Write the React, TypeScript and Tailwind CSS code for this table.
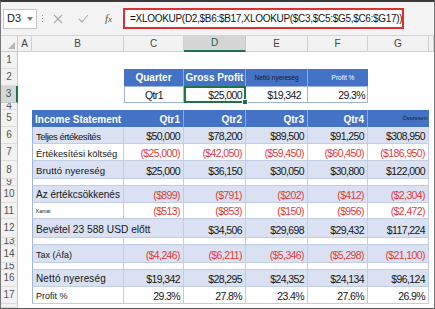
import React from 'react';

const GRID = 'grid grid-cols-[17px_14px_92px_60px_62px_62px_60px_61px_1fr]';
const SANS = "font-['Liberation_Sans',Arial,sans-serif]";
const NUM = "font-['Liberation_Sans',Arial,sans-serif] text-[10.5px] tracking-[-0.6px]";
const RED = 'text-[#e23b3b]';

function RH({ n, active }: { n?: number | string; active?: boolean }) {
  return (
    <div
      className={`flex items-center justify-center overflow-hidden border-b border-r text-[10px] leading-none ${SANS} ${
        active
          ? 'bg-[#d6d6d6] border-r-2 border-r-[#217346] border-b-[#c8c8c8] text-[#1f5f3b]'
          : 'bg-[#f2f2f2] border-r-[#c8c8c8] border-b-[#dcdcdc] text-[#555]'
      }`}
    >
      {n}
    </div>
  );
}

function W() {
  return <div className="bg-white" />;
}

function TC({
  children,
  band,
  right,
  red,
  first,
  className = '',
}: {
  children?: React.ReactNode;
  band?: boolean;
  right?: boolean;
  red?: boolean;
  first?: boolean;
  className?: string;
}) {
  return (
    <div
      className={`flex items-end whitespace-nowrap overflow-visible border-r border-b border-[#c3cde2] px-[3px] pb-[2px] leading-none ${
        band ? 'bg-[#d9e1f2]' : 'bg-white'
      } ${right ? 'justify-end' : ''} ${red ? RED : 'text-[#151515]'} ${first ? 'border-l border-l-[#9fb4dc]' : ''} ${className}`}
    >
      {children}
    </div>
  );
}

type DataRow = {
  n: number;
  h: string;
  band: boolean;
  label?: React.ReactNode;
  labelCls?: string;
  vals?: string[];
  red?: boolean;
  spanLabel?: boolean;
};

const rows: DataRow[] = [
  {
    n: 6,
    h: 'h-[17px]',
    band: true,
    label: 'Teljes értékesítés',
    labelCls: `${SANS} text-[9.5px] tracking-[-0.5px]`,
    vals: ['$50,000', '$78,200', '$89,500', '$91,250', '$308,950'],
  },
  {
    n: 7,
    h: 'h-[17px]',
    band: false,
    label: 'Értékesítési költség',
    labelCls: `${SANS} text-[9.4px]`,
    vals: ['($25,000)', '($42,050)', '($59,450)', '($60,450)', '($186,950)'],
    red: true,
  },
  {
    n: 8,
    h: 'h-[18px]',
    band: true,
    label: 'Bruttó nyereség',
    labelCls: `${SANS} text-[9.6px] tracking-[0.1px]`,
    vals: ['$25,000', '$36,150', '$30,050', '$30,800', '$122,000'],
  },
  { n: 9, h: 'h-[7px]', band: false },
  {
    n: 10,
    h: 'h-[17px]',
    band: true,
    label: 'Az értékcsökkenés',
    labelCls: `${SANS} text-[10px]`,
    vals: ['($899)', '($791)', '($202)', '($412)', '($2,304)'],
    red: true,
  },
  {
    n: 11,
    h: 'h-[16px]',
    band: false,
    label: 'Kamat',
    labelCls: `${SANS} text-[5px] pb-[4px]`,
    vals: ['($513)', '($853)', '($150)', '($956)', '($2,472)'],
    red: true,
  },
  {
    n: 12,
    h: 'h-[19px]',
    band: true,
    label: 'Bevétel 23 588 USD előtt',
    labelCls: `${SANS} text-[10.2px]`,
    vals: ['', '$34,506', '$29,698', '$29,432', '$117,224'],
    spanLabel: true,
  },
  { n: 13, h: 'h-[7px]', band: false },
  {
    n: 14,
    h: 'h-[18px]',
    band: true,
    label: 'Tax (Áfa)',
    labelCls: `${SANS} text-[9px]`,
    vals: ['($4,246)', '($6,211)', '($5,346)', '($5,298)', '($21,100)'],
    red: true,
  },
  { n: 15, h: 'h-[7px]', band: false },
  {
    n: 16,
    h: 'h-[17px]',
    band: true,
    label: 'Nettó nyereség',
    labelCls: `${SANS} text-[10px] tracking-[0.15px]`,
    vals: ['$19,342', '$28,295', '$24,352', '$24,134', '$96,124'],
  },
  {
    n: 17,
    h: 'h-[17px]',
    band: false,
    label: 'Profit %',
    labelCls: `${SANS} text-[9px]`,
    vals: ['29.3%', '27.8%', '23.4%', '27.6%', '26.9%'],
  },
];

function FormulaBar() {
  return (
    <div className="h-[34px] bg-[#f3f3f3] flex items-center border-b border-[#d4d4d4]">
      <div
        className={`ml-[2px] w-[34px] h-[20px] bg-white border border-[#c6c6c6] flex items-center justify-between pl-[3px] pr-[3px] text-[11px] text-[#222] ${SANS}`}
      >
        <span>D3</span>
        <svg width="6" height="4" viewBox="0 0 6 4">
          <path d="M0 0 L6 0 L3 4 Z" fill="#777" />
        </svg>
      </div>
      <div className="ml-[5px] flex flex-col gap-[2px]">
        <div className="w-[1px] h-[1px] bg-[#9a9a9a]" />
        <div className="w-[1px] h-[1px] bg-[#9a9a9a]" />
        <div className="w-[1px] h-[1px] bg-[#9a9a9a]" />
      </div>
      <svg className="ml-[10px]" width="10" height="10" viewBox="0 0 10 10">
        <path d="M1 1 L9 9 M9 1 L1 9" stroke="#a8a8a8" strokeWidth="1.1" />
      </svg>
      <svg className="ml-[15px]" width="11" height="9" viewBox="0 0 11 9">
        <path d="M1 5 L4 8 L10 1" stroke="#a8a8a8" strokeWidth="1.1" fill="none" />
      </svg>
      <span className="ml-[16px] font-['Liberation_Serif',serif] italic text-[11px] text-[#555]">
        f<span className="text-[9px]">x</span>
      </span>
      <div
        className={`ml-[11px] w-[281px] h-[21px] bg-white border-2 border-[#dc3034] flex items-center pl-[5px] text-[10px] tracking-[-0.3px] text-[#111] whitespace-nowrap overflow-hidden ${SANS}`}
      >
        =XLOOKUP(D2,$B6:$B17,XLOOKUP($C3,$C5:$G5,$C6:$G17))
      </div>
    </div>
  );
}

function ColHeader() {
  const letters = ['A', 'B', 'C', 'D', 'E', 'F', 'G', ''];
  return (
    <div className={`${GRID} h-[16px] bg-[#f2f2f2] ${SANS}`}>
      <div className="relative border-r border-b border-[#c8c8c8]">
        <svg className="absolute right-[2px] bottom-[2px]" width="7" height="7" viewBox="0 0 7 7">
          <path d="M7 0 L7 7 L0 7 Z" fill="#b5b5b5" />
        </svg>
      </div>
      {letters.map((l, i) => (
        <div
          key={i}
          className={`flex items-center justify-center text-[10px] leading-none ${
            l === 'D'
              ? 'bg-[#d6d6d6] border-b-2 border-b-[#217346] border-r border-r-[#c8c8c8] text-[#1f5f3b]'
              : 'border-b border-r border-[#d0d0d0] text-[#444]'
          }`}
        >
          {l}
        </div>
      ))}
    </div>
  );
}

function TableRow({ r }: { r: DataRow }) {
  const vals = r.vals ?? ['', '', '', '', ''];
  return (
    <div className={`${GRID} ${r.h}`}>
      <RH n={r.n} />
      <W />
      {r.spanLabel ? (
        <TC band={r.band} first className={`col-span-2 ${r.labelCls ?? ''}`}>
          {r.label}
        </TC>
      ) : (
        <TC band={r.band} first className={r.labelCls ?? ''}>
          {r.label}
        </TC>
      )}
      {vals.map((v, i) =>
        r.spanLabel && i === 0 ? null : (
          <TC key={i} band={r.band} right red={r.red} className={NUM}>
            {v}
          </TC>
        )
      )}
      <W />
    </div>
  );
}

export default function App() {
  return (
    <div className="w-[435px] h-[309px] overflow-hidden bg-white border-t-2 border-t-[#3a3a3a] border-x border-x-[#777] border-b border-b-[#555] flex flex-col">
      <FormulaBar />
      <ColHeader />

      {/* row 1 */}
      <div className={`${GRID} h-[17px]`}>
        <RH n={1} />
        <W />
        <W />
        <W />
        <W />
        <W />
        <W />
        <W />
        <W />
      </div>

      {/* row 2 */}
      <div className={`${GRID} h-[17px]`}>
        <RH n={2} />
        <W />
        <W />
        <div className={`flex items-center justify-center bg-[#4472c4] border-r border-r-[#8eaadb] text-white font-bold text-[10px] ${SANS}`}>
          Quarter
        </div>
        <div className={`flex items-center justify-center bg-[#4472c4] border-r border-r-[#8eaadb] text-white font-bold text-[10px] ${SANS}`}>
          Gross Profit
        </div>
        <div className={`flex items-center justify-center bg-[#4472c4] border-r border-r-[#8eaadb] text-[#1a1a2a] text-[6.5px] ${SANS}`}>
          Nettó nyereség
        </div>
        <div className={`flex items-center justify-center pl-[10px] bg-[#4472c4] text-white text-[6.5px] ${SANS}`}>
          Profit %
        </div>
        <W />
        <W />
      </div>

      {/* row 3 */}
      <div className={`${GRID} h-[17px]`}>
        <RH n={3} active />
        <W />
        <W />
        <div className={`flex items-end justify-center pb-[2px] bg-white border border-[#9fb4dc] leading-none text-[#151515] ${NUM}`}>
          Qtr1
        </div>
        <div className={`relative flex items-end justify-end pr-[2px] pb-[1px] bg-white border-2 border-[#217346] leading-none text-[#151515] ${NUM}`}>
          $25,000
          <div className="absolute -right-[4px] -bottom-[4px] w-[6px] h-[6px] bg-[#217346] border border-white" />
        </div>
        <div className={`flex items-end justify-end pr-[6px] pb-[2px] bg-white border-y border-r border-[#9fb4dc] leading-none text-[#151515] ${NUM}`}>
          $19,342
        </div>
        <div className={`flex items-end justify-end pr-[2px] pb-[2px] bg-white border-y border-r border-[#9fb4dc] leading-none text-[#151515] ${NUM}`}>
          29.3%
        </div>
        <W />
        <W />
      </div>

      {/* row 4 */}
      <div className={`${GRID} h-[7px]`}>
        <RH n={4} />
        <W />
        <W />
        <W />
        <W />
        <W />
        <W />
        <W />
        <W />
      </div>

      {/* row 5 header */}
      <div className={`${GRID} h-[17px]`}>
        <RH n={5} />
        <W />
        <div className={`flex items-end pl-[3px] pb-[2px] bg-[#4472c4] text-white font-bold text-[10px] leading-none whitespace-nowrap ${SANS}`}>
          Income Statement
        </div>
        {['Qtr1', 'Qtr2', 'Qtr3', 'Qtr4'].map((q) => (
          <div
            key={q}
            className={`flex items-end justify-end pr-[3px] pb-[2px] bg-[#4472c4] border-r border-r-[#8eaadb] text-white font-bold text-[10px] leading-none ${SANS}`}
          >
            {q}
          </div>
        ))}
        <div className={`flex items-center justify-end pr-[2px] bg-[#4472c4] text-[#1a1a2a] text-[5.5px] leading-none ${SANS}`}>
          Összesen
        </div>
        <W />
      </div>

      {rows.map((r) => (
        <TableRow key={r.n} r={r} />
      ))}

      <div className={`${GRID} flex-1`}>
        <RH />
        <W />
        <W />
        <W />
        <W />
        <W />
        <W />
        <W />
        <W />
      </div>
    </div>
  );
}
